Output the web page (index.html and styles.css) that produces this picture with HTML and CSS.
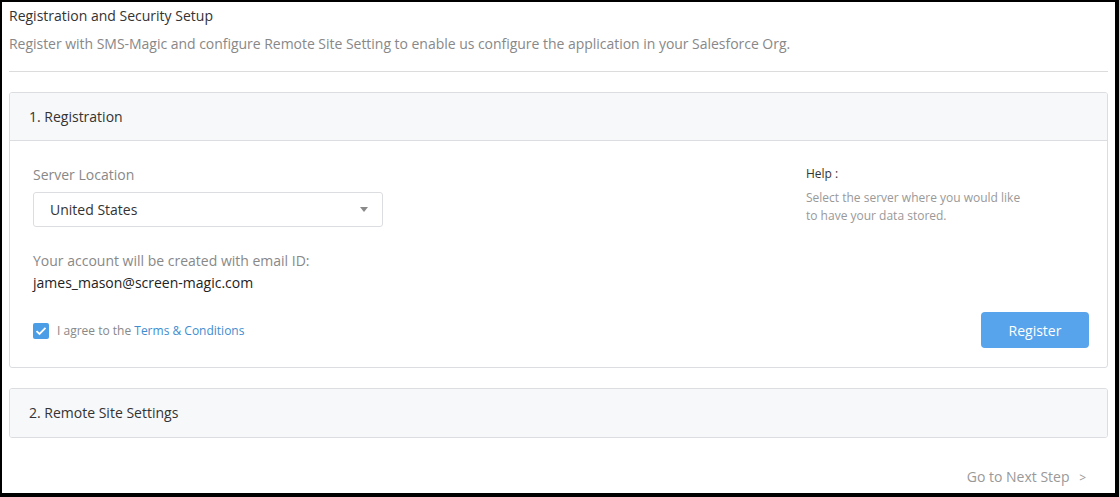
FILE: index.html
```html
<!DOCTYPE html>
<html lang="en">
<head>
    <meta charset="UTF-8">
    <meta name="viewport" content="width=device-width, initial-scale=1.0">
    <title>Registration and Security Setup</title>
    <link rel="stylesheet" href="styles.css">
</head>
<body>
    <div class="frame">
        <div class="page-head">
            <h2 class="page-title">Registration and Security Setup</h2>
            <p class="page-desc">Register with SMS-Magic and configure Remote Site Setting to enable us configure the application in your Salesforce Org.</p>
        </div>

        <div class="card">
            <div class="card-head">1. Registration</div>
            <div class="card-body">
                <div class="form-col">
                    <label class="field-label" for="server">Server Location</label>
                    <div class="select">
                        <span id="server">United States</span>
                        <span class="caret"></span>
                    </div>

                    <p class="account-note">Your account will be created with email ID:</p>
                    <p class="account-email">james_mason@screen-magic.com</p>

                    <div class="agree">
                        <span class="checkbox">
                            <svg width="12" height="10" viewBox="0 0 12 10"><path d="M1.5 5.2 L4.5 8 L10.5 1.8" fill="none" stroke="#fff" stroke-width="1.8"/></svg>
                        </span>
                        <span>I agree to the <a href="#" class="link">Terms &amp; Conditions</a></span>
                    </div>
                </div>
                <div class="help-col">
                    <div class="help-title">Help :</div>
                    <p class="help-text">Select the server where you would like<br>to have your data stored.</p>
                    <button class="btn-register">Register</button>
                </div>
            </div>
        </div>

        <div class="card card-closed">
            <div class="card-head">2. Remote Site Settings</div>
        </div>

        <div class="next-step">Go to Next Step <span class="chev">&gt;</span></div>
    </div>
</body>
</html>
```

FILE: styles.css
```css
html, body {
    margin: 0;
    height: 100%;
}

body {
    background: #000;
    padding: 2px 4px 4px 2px;
    box-sizing: border-box;
    font-family: "Open Sans", "Noto Sans", sans-serif;
    font-size: 14px;
    color: #333;
}

.frame {
    background: #fff;
    height: 100%;
    padding: 0 7px;
    box-sizing: border-box;
}

.page-head {
    border-bottom: 1px solid #dcdcdc;
    padding-top: 4px;
    padding-bottom: 17px;
}

.page-title {
    margin: 0;
    font-size: 14px;
    font-weight: normal;
    line-height: 20px;
    color: #333;
}

.page-desc {
    margin: 8px 0 0;
    line-height: 20px;
    color: #888;
    letter-spacing: -0.03px;
}

.card {
    margin-top: 20px;
    border: 1px solid #dcdde0;
    border-radius: 3px;
    overflow: hidden;
}

.card-head {
    background: #f7f8fa;
    height: 47px;
    line-height: 47px;
    padding-left: 19px;
    color: #333;
}

.card-body {
    border-top: 1px solid #dcdde0;
    display: flex;
    justify-content: space-between;
    padding: 24px 18px 18px 23px;
    height: 184px;
}

.form-col {
    width: 350px;
}

.field-label {
    display: block;
    color: #888;
    line-height: 20px;
}

.select {
    margin-top: 7px;
    height: 35px;
    border: 1px solid #dcdde0;
    border-radius: 3px;
    box-sizing: border-box;
    display: flex;
    align-items: center;
    justify-content: space-between;
    padding: 0 14px 0 16px;
}

.caret {
    width: 0;
    height: 0;
    border-left: 4px solid transparent;
    border-right: 4px solid transparent;
    border-top: 5px solid #8a8a8a;
}

.account-note {
    margin: 24px 0 0;
    line-height: 20px;
    color: #888;
}

.account-email {
    margin: 2px 0 0;
    line-height: 20px;
    color: #222;
}

.agree {
    margin-top: 29px;
    display: flex;
    align-items: center;
    gap: 8px;
    font-size: 12px;
    color: #888;
}

.checkbox {
    width: 16px;
    height: 16px;
    border-radius: 2px;
    background: #4b9de6;
    display: flex;
    align-items: center;
    justify-content: center;
}

.link {
    color: #3e8dcf;
    text-decoration: none;
}

.help-col {
    width: 283px;
    display: flex;
    flex-direction: column;
    align-items: flex-start;
}

.help-title {
    font-size: 12px;
    color: #333;
    line-height: 18px;
}

.help-text {
    margin: 6px 0 0;
    font-size: 12px;
    line-height: 18px;
    color: #999;
}

.btn-register {
    margin-top: auto;
    align-self: flex-end;
    width: 108px;
    height: 36px;
    border: none;
    border-radius: 4px;
    background: #57a3ec;
    color: #fff;
    font-family: inherit;
    font-size: 14px;
    margin-bottom: 1px;
}

.card-closed .card-head {
    height: 48px;
    line-height: 48px;
}

.next-step {
    margin-top: 29px;
    text-align: right;
    padding-right: 22px;
    color: #999;
    line-height: 20px;
}

.chev {
    margin-left: 6px;
    font-size: 12px;
}
```
